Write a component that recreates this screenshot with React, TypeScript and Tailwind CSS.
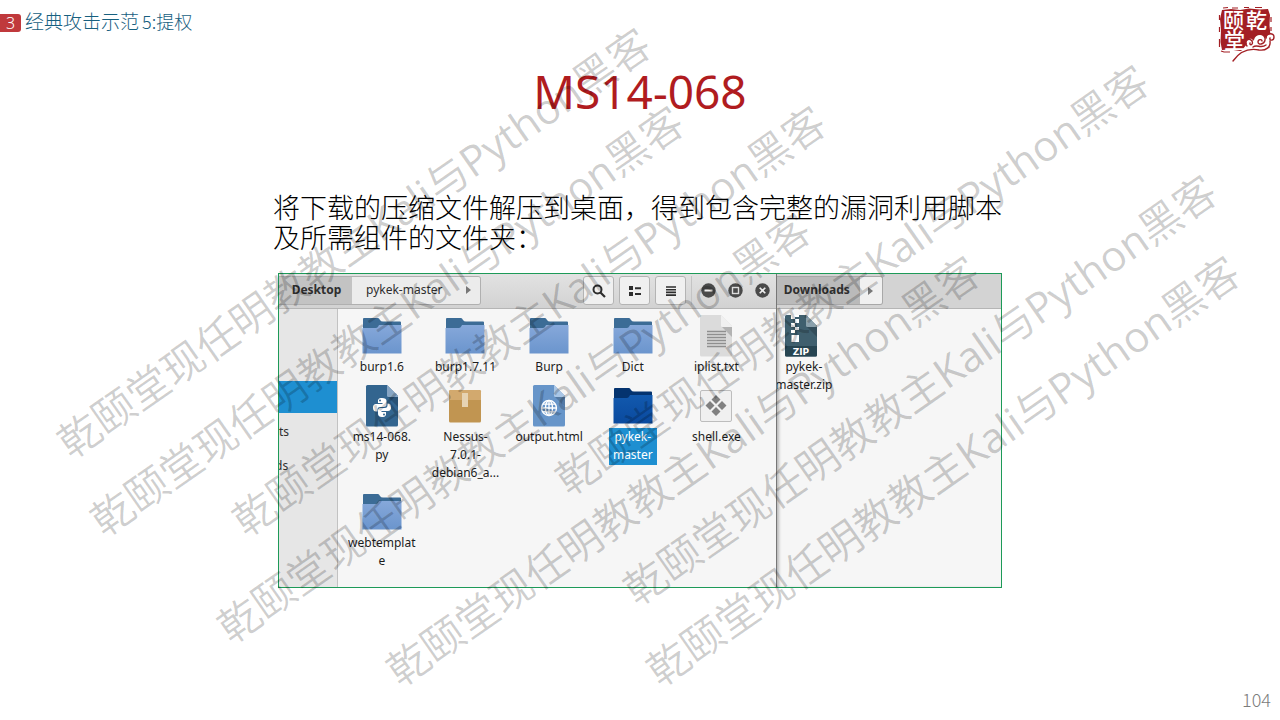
import React from "react";

type Kind = "folder" | "folderOpen" | "python" | "package" | "html" | "text" | "exe" | "zip";

const LABEL = "font-['Noto_Sans','Noto_Sans_CJK_SC',sans-serif] text-xs leading-[18px]";

function Icon({ kind }: { kind: Kind }) {
  if (kind === "folder" || kind === "folderOpen") {
    const sel = kind === "folderOpen";
    const body = sel ? "url(#folderSel)" : "url(#folderBody)";
    return (
      <svg width="42" height="42" viewBox="0 0 42 42" aria-hidden="true">
        <defs>
          <linearGradient id="folderBody" x1="0" y1="0" x2="0" y2="1">
            <stop offset="0" stopColor="#86a8da" />
            <stop offset="1" stopColor="#6b95cd" />
          </linearGradient>
          <linearGradient id="folderSel" x1="0" y1="0" x2="0" y2="1">
            <stop offset="0" stopColor="#1259ae" />
            <stop offset="1" stopColor="#0a4a9e" />
          </linearGradient>
        </defs>
        <path d="M2 4Q2 3 3 3H17Q18 3 19 5Q20 6.500 22 6.500H39Q40 6.500 40 7.500V14H2Z" fill={sel ? "#04336f" : "#3c6c96"} />
        <path d="M1.500 13H15Q16.500 13 17.500 11L18 10H40.500V38.500H1.500Z" fill={body} />
      </svg>
    );
  }
  if (kind === "package") {
    return (
      <svg width="42" height="42" viewBox="0 0 42 42" aria-hidden="true">
        <rect x="5" y="5" width="32" height="32.500" rx="1.500" fill="#c19551" />
        <path d="M6.500 5H35.500Q37 5 37 6.500V15H5V6.500Q5 5 6.500 5Z" fill="#d2a96e" />
        <rect x="18" y="8" width="6" height="14" fill="#e6d3b3" />
      </svg>
    );
  }
  if (kind === "exe") {
    return (
      <svg width="42" height="42" viewBox="0 0 42 42" aria-hidden="true">
        <rect x="5.500" y="5.500" width="31" height="31" rx="1.500" fill="#f0f0f0" stroke="#bdbdbd" />
        <path d="M21 10l4.500 4.500L21 19l-4.500-4.500ZM15 16l4.500 4.500-4.500 4.500L10.500 20.500ZM27 16L31.500 20.500 27 25l-4.500-4.500ZM21 22l4.500 4.500L21 31l-4.500-4.500Z" fill="#808080" />
      </svg>
    );
  }
  const fill = { python: "#33658f", html: "#6795c9", text: "#dbdbdb", zip: "#3f5f6e" }[kind];
  const fold = { python: "#86a5c4", html: "#a9c6e6", text: "#f0f0f0", zip: "#8ba1ac" }[kind];
  return (
    <svg width="42" height="42" viewBox="0 0 42 42" aria-hidden="true">
      <path d="M5 1.500Q5 0 6.500 0H26L37 11V40Q37 41.500 35.500 41.500H6.500Q5 41.500 5 40Z" fill={fill} />
      <path d="M27 12H37V22Z" fill="#000" opacity=".18" />
      <path d="M26 0L37 11V12H27.500Q26 12 26 10.500Z" fill={fold} />
      {kind === "text" && <path d="M12 16.500H31M12 19.500H31M12 22.500H31M12 25.500H31M12 28.500H31M12 31.500H31" stroke="#8f8f8f" strokeWidth="1.500" />}
      {kind === "html" && (
        <g fill="none" stroke="#fff" strokeWidth="1.300">
          <circle cx="21" cy="23" r="7.500" />
          <ellipse cx="21" cy="23" rx="3.500" ry="7.500" />
          <path d="M21 15.500V30.500M13.500 23H28.500M14.500 19.200H27.500M14.500 26.800H27.500" />
        </g>
      )}
      {kind === "python" && (
        <g transform="translate(12 13)">
          <path d="M9 0C5.500 0 5 1.500 5 3V5H9.500V6H3C1 6 0 7.500 0 9.500C0 12 1 13.500 3 13.500H4.500V11.500C4.500 9.800 5.800 9 7 9H11C12.300 9 13.500 8 13.500 6.500V3C13.500 1 12 0 9 0Z" fill="#fff" />
          <path d="M9 19C12.500 19 13 17.500 13 16V14H8.500V13H15C17 13 18 11.500 18 9.500C18 7 17 5.500 15 5.500H14.500V7.500C14.500 9.200 13.200 10 12 10H7.500C6.200 10 5 11 5 12.500V16C5 18 6.500 19 9 19Z" fill="#fff" />
          <circle cx="7" cy="2.500" r="1" fill="#33658f" />
          <circle cx="11" cy="16.500" r="1" fill="#33658f" />
        </g>
      )}
      {kind === "zip" && (
        <g>
          <path d="M11 0H15V4H11ZM15 4H19V8H15ZM11 8H15V12H11ZM15 12H19V15H15ZM11 15H15V18H11ZM15 0H19V2H15Z" fill="#fff" />
          <rect x="11.500" y="20" width="7.500" height="7" fill="#fff" />
          <path d="M5 31H37V40Q37 41.500 35.500 41.500H6.500Q5 41.500 5 40Z" fill="#274552" />
          <text x="21" y="39.500" textAnchor="middle" fontFamily="DejaVu Sans, sans-serif" fontWeight="700" fontSize="9" fill="#fff">ZIP</text>
        </g>
      )}
    </svg>
  );
}

function Entry({ kind, lines, selected }: { kind: Kind; lines: string[]; selected?: boolean }) {
  return (
    <button type="button" className="flex w-full flex-col items-center gap-px">
      <Icon kind={kind} />
      <span className={`${LABEL} whitespace-nowrap ${selected ? "bg-[#1e8fd1] px-1 pb-px text-white" : "text-[#1c1c1c]"}`}>
        {lines.map((l) => (
          <span key={l} className="block">{l}</span>
        ))}
      </span>
    </button>
  );
}

const FILES: { kind: Kind; lines: string[]; selected?: boolean }[] = [
  { kind: "folder", lines: ["burp1.6"] },
  { kind: "folder", lines: ["burp1.7.11"] },
  { kind: "folder", lines: ["Burp"] },
  { kind: "folder", lines: ["Dict"] },
  { kind: "text", lines: ["iplist.txt"] },
  { kind: "python", lines: ["ms14-068.", "py"] },
  { kind: "package", lines: ["Nessus-", "7.0.1-", "debian6_a..."] },
  { kind: "html", lines: ["output.html"] },
  { kind: "folderOpen", lines: ["pykek-", "master"], selected: true },
  { kind: "exe", lines: ["shell.exe"] },
  { kind: "folder", lines: ["webtemplat", "e"] },
];

const MARKS = [
  "left-[62px] top-[417px]",
  "left-[95px] top-[495px]",
  "left-[237px] top-[495px]",
  "left-[222px] top-[602px]",
  "left-[391px] top-[645px]",
  "left-[560px] top-[454px]",
  "left-[628px] top-[564px]",
  "left-[651px] top-[645px]",
];

const Arrow = () => (
  <svg width="6" height="8" viewBox="0 0 6 8" aria-hidden="true"><path d="M0 0L5 4L0 8Z" fill="#777" /></svg>
);

const TOOL = "flex h-[29px] w-[31px] items-center justify-center rounded-[3px] border border-[#b4b4b4] bg-[#f0f0f0]";

function Seal() {
  return (
    <svg width="60" height="56" viewBox="0 0 60 56" role="img" aria-label="乾颐堂">
      <path d="M6 4L15 3L24 4L33 2.500L44 3.500L52 3L54 9L53.500 19L54.500 30L53.500 42L46 43.500L34 43.500L24 45L14 43.500L6 44L4.500 36L5 24L4 13Z" fill="#a31f24" />
      <path d="M7 2L12 1.500M16 2H22M28 1.500H33M39 1.500H46M3.500 9V14M3.500 21V26M3.500 33V41M55 11V16M55 21V25M5 45L8 46H14" fill="none" stroke="#a31f24" strokeWidth="1.200" />
      <g fill="#fff" fontFamily="Noto Sans CJK SC, sans-serif" fontWeight="500" fontSize="21">
        <text x="7" y="22">颐</text>
        <text x="30" y="22">乾</text>
        <text x="8" y="42">堂</text>
      </g>
      <path d="M17 55C25 46 33 43 43 45C50 46 54 42 55 38C58 35 59 31 56 29C53 27 49 30 51 33C47 27 39 28 38 34C34 31 29 34 31 38" fill="#fff" />
      <g fill="none" stroke="#a31f24" strokeWidth="1.400" strokeLinecap="round">
        <path d="M17 55C24 45 33 42 43 44C50 45 55 41 54 35" />
        <path d="M31 40C27 35 33 31 36 35C38 39 33 40 34 37" />
        <path d="M37 34C37 27 47 26 49 32C50 38 42 40 42 36C42 33 46 33 46 35" />
        <path d="M50 32C50 27 58 26 58 31C58 35 53 35 54 32" />
        <path d="M37 41C41 38 45 43 50 39" />
      </g>
    </svg>
  );
}

export default function App() {
  return (
    <main className="relative flex min-h-screen flex-col overflow-hidden bg-white font-['Noto_Sans','Noto_Sans_CJK_SC',sans-serif]">
      <header className="flex h-[61px] items-start justify-between pr-1">
        <div className="flex items-center gap-1 pt-[7px]">
          <span className="mt-1 flex h-[18px] w-[21px] items-center justify-center rounded-r-[3px] bg-[#c0393c] text-base font-light text-white">3</span>
          <span className="flex gap-[3px] font-['Noto_Sans_CJK_SC',sans-serif] text-[19px] leading-7 font-light text-[#17607f]">
            <span>经典攻击示范</span>
            <span className="text-lg leading-7">5:提权</span>
          </span>
        </div>
        <div className="pt-1.5"><Seal /></div>
      </header>

      <h1 className="text-center text-[46px] leading-[60px] text-[#b01c1f]">MS14-068</h1>

      <p className="mx-auto mt-[71px] w-full max-w-[734px] font-['Noto_Sans_CJK_SC',sans-serif] text-[27px] leading-[30px] font-light text-black">
        将下载的压缩文件解压到桌面，得到包含完整的漏洞利用脚本及所需组件的文件夹：
      </p>

      <section className="mx-auto mt-[21px] flex min-h-[315px] w-full max-w-[724px] bg-[#1d9a58] p-px">
        <div className="flex flex-[498] flex-col bg-[#f6f6f6]">
          <div className="flex h-[35px] items-start justify-between border-b border-[#b5b5b5] bg-linear-to-b from-[#e2e2e2] to-[#d2d2d2] pt-0.5">
            <nav className="flex h-[29px] overflow-hidden rounded-r-[3px] border border-l-0 border-[#b0b0b0] text-xs text-[#2e2e2e]">
              <button type="button" className="w-[73px] bg-[#c3c3c3] pb-px pl-0.5 font-bold">Desktop</button>
              <button type="button" className="flex w-[128px] items-center justify-between bg-[#ececec] pr-2 pb-px pl-[14px]">
                pykek-master <Arrow />
              </button>
            </nav>
            <div className="flex items-center pr-1.5">
              <div className="flex gap-[5px] border-r border-[#c4c4c4] pr-[5px]">
                <button type="button" aria-label="Search" className={TOOL}>
                  <svg width="14" height="14" viewBox="0 0 14 14"><circle cx="5.500" cy="5.500" r="4" fill="none" stroke="#2e2e2e" strokeWidth="2" /><path d="M8.500 8.500L13 13" stroke="#2e2e2e" strokeWidth="2.200" /></svg>
                </button>
                <button type="button" aria-label="List view" className={TOOL}>
                  <svg width="12" height="10" viewBox="0 0 12 10"><path d="M0 0H4V4H0ZM0 6H4V10H0ZM6 1.200H12V3.200H6ZM6 7H12V9H6Z" fill="#2e2e2e" /></svg>
                </button>
                <button type="button" aria-label="Menu" className={TOOL}>
                  <svg width="10" height="10" viewBox="0 0 10 10"><path d="M0 1H10M0 3.700H10M0 6.400H10M0 9.100H10" stroke="#2e2e2e" strokeWidth="1.600" /></svg>
                </button>
              </div>
              <div className="flex gap-3 pl-[9px]">
                <button type="button" aria-label="Minimize">
                  <svg width="15" height="15" viewBox="0 0 15 15"><circle cx="7.500" cy="7.500" r="7.200" fill="#4a4a4a" /><path d="M3.500 7.500H11.500" stroke="#eee" strokeWidth="2" /></svg>
                </button>
                <button type="button" aria-label="Maximize">
                  <svg width="15" height="15" viewBox="0 0 15 15"><circle cx="7.500" cy="7.500" r="7.200" fill="#4a4a4a" /><rect x="4.500" y="4.500" width="6" height="6" fill="none" stroke="#ddd" strokeWidth="1.400" /></svg>
                </button>
                <button type="button" aria-label="Close">
                  <svg width="15" height="15" viewBox="0 0 15 15"><circle cx="7.500" cy="7.500" r="7.200" fill="#4a4a4a" /><path d="M4.700 4.700L10.300 10.300M10.300 4.700L4.700 10.300" stroke="#eee" strokeWidth="1.600" /></svg>
                </button>
              </div>
            </div>
          </div>
          <div className="flex flex-1">
            <aside className="w-[59px] border-r border-[#c2c2c2] bg-[#e6e6e6] pt-[72px] text-xs text-[#2e2e2e]">
              <div className="mb-0.5 h-8 bg-[#1e8fd1]" />
              <div className="flex h-[34px] items-center">ts</div>
              <div className="flex h-[34px] items-center overflow-hidden"><span className="-ml-1">ds</span></div>
            </aside>
            <div className="grid flex-1 grid-cols-5 content-start gap-y-[9px] pt-1.5 pr-[18px] pb-4 pl-0.5">
              {FILES.map((f) => (
                <Entry key={f.lines[0]} {...f} />
              ))}
            </div>
          </div>
        </div>
        <div className="flex flex-[224] flex-col overflow-hidden border-l border-[#777] bg-[#f6f6f6] shadow-[inset_3px_0_3px_-1px_rgba(0,0,0,0.25)]">
          <div className="h-[35px] border-b border-[#b5b5b5] bg-[#d3d3d3] pt-0.5">
            <nav className="flex h-[29px] w-[106px] overflow-hidden rounded-r-[3px] border border-l-0 border-[#a8a8a8] text-xs text-[#2e2e2e]">
              <button type="button" className="flex-1 bg-[#bababa] pr-1 pb-px font-bold">Downloads</button>
              <button type="button" aria-label="Next" className="flex w-[22px] items-center justify-center bg-[#f0f0f0]"><Arrow /></button>
            </nav>
          </div>
          <div className="w-12 pt-1.5">
            <button type="button" className="flex flex-col items-start gap-px">
              <span className="pl-[3px]"><Icon kind="zip" /></span>
              <span className={`${LABEL} -ml-0.5 text-center text-[#1c1c1c]`}>
                <span className="block">pykek-</span>
                <span className="block">master.zip</span>
              </span>
            </button>
          </div>
        </div>
      </section>

      <footer className="mt-auto flex justify-end pr-[9px] pb-2 font-['Noto_Sans_CJK_SC',sans-serif] text-lg leading-[26px] font-light text-[#7c7c7c]">104</footer>

      <div className="pointer-events-none absolute inset-0 overflow-hidden font-['Open_Sans','Noto_Sans_CJK_SC',sans-serif] text-[42px] leading-[60px] font-[350] text-black/20" aria-hidden="true">
        {MARKS.map((m) => (
          <span key={m} className={`absolute origin-left -rotate-[35deg] whitespace-nowrap ${m}`}>
            乾颐堂现任明教教主<span className="font-normal">Kali</span>与<span className="font-normal">Python</span>黑客
          </span>
        ))}
      </div>
    </main>
  );
}
